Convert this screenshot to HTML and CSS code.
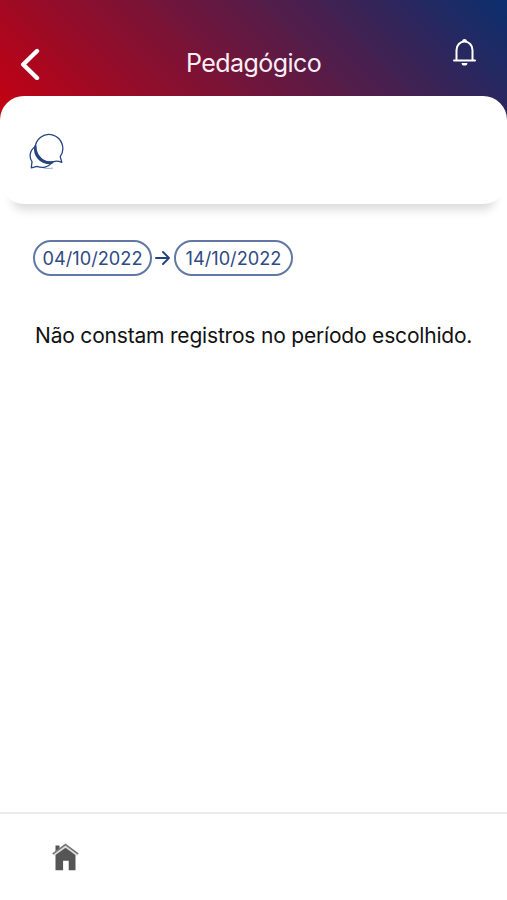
FILE: index.html
```html
<!DOCTYPE html>
<html lang="pt-BR">
<head>
  <meta charset="UTF-8">
  <meta name="viewport" content="width=device-width, initial-scale=1.0">
  <title>Pedagógico</title>
  <link rel="stylesheet" href="styles.css">
</head>
<body>
  <!-- Topo -->
  <header class="topo">
    <a class="voltar" href="#" aria-label="Voltar">
      <svg width="20" height="32" viewBox="0 0 20 32" fill="none" stroke="#fff" stroke-width="4.400" stroke-linecap="round" stroke-linejoin="round">
        <path d="M17 3 3.200 16.500 17 30"/>
      </svg>
    </a>
    <h1>Pedagógico</h1>
    <a class="sino" href="#" aria-label="Notificações">
      <svg width="24" height="28" viewBox="0 0 24 28">
        <path d="M1 22.600h21M3.500 21.600V12a8 8.500 0 0 1 16 0v9.600" fill="none" stroke="#fff" stroke-width="2" stroke-linecap="round"/>
        <path d="M9 4a2.500 3 0 0 1 5 0zM8.600 25h5.800a2.900 2.600 0 0 1-5.800 0z" fill="#fff"/>
      </svg>
    </a>
  </header>

  <!-- Cartão com o ícone de mensagens -->
  <section class="cartao">
    <svg width="36" height="37" viewBox="0 0 36 37" fill="none" stroke="#24457f" stroke-width="1.300" stroke-linejoin="round">
      <path d="M31.200 23.600A13.800 14 0 1 0 24.700 28.600Q28 27.500 32.800 29.300L31.200 23.600Z"/>
      <path d="M6.200 13.500C.6 17.500-.2 24 3 28.600L2.300 34.800 8 33.300C13 35.300 19.500 34.500 22.500 30"/>
      <path d="M6.300 12.500C3.600 22 11.500 32 22.800 30.300L24.500 28.600C15 30.300 6.800 23.500 6.900 13z" fill="#24457f"/>
      <path d="M14 34.800c3 .8 6.500.7 10 .3" stroke-width=".8" opacity=".6"/>
    </svg>
  </section>

  <main>
    <!-- Período -->
    <div class="periodo">
      <button class="data">04/10/2022</button>
      <svg width="16" height="16" viewBox="0 0 16 16" fill="none" stroke="#24417c" stroke-width="1.900" stroke-linecap="round" stroke-linejoin="round">
        <path d="M1 8h13M8 2 14 8l-6 6"/>
      </svg>
      <button class="data">14/10/2022</button>
    </div>
    <p class="aviso">Não constam registros no período escolhido.</p>
  </main>

  <!-- Barra inferior -->
  <nav class="rodape">
    <a href="#" aria-label="Início">
      <svg width="28" height="28" viewBox="0 0 28 28">
        <path d="M4.500 12V2.500h4v5L14.500 3l10 9v15.200h-6.800v-9.400h-5.600v9.400H4.500z" fill="#555"/>
        <path d="M2.500 11.600 14.500 3l12 8.600" fill="none" stroke="#ddd" stroke-width="2.800"/>
        <path d="M2.200 10.600 14.500 1.600l12.200 9" fill="none" stroke="#777" stroke-width="1.700" stroke-linecap="round"/>
      </svg>
    </a>
  </nav>
</body>
</html>
```

FILE: styles.css
```css
* {
  box-sizing: border-box;
}
body {
  margin: 0;
  min-height: 100vh;
  display: flex;
  flex-direction: column;
  font-family: Inter, "Liberation Sans", sans-serif;
  background-color: #fff;
}
a {
  display: block;
}
svg {
  display: block;
}
/* --- Topo --- */
.topo {
  height: 120px;
  padding: 0 30px 0 20px;
  display: grid;
  grid-template-columns: 60px 1fr 60px;
  align-items: start;
  background: linear-gradient(45deg, #c60010 0%, #0b2f6e 100%);
}
.voltar {
  padding-top: 48px;
}
.topo h1 {
  margin: 47px 0 0 10px;
  font-size: 25px;
  font-weight: 400;
  line-height: 32px;
  letter-spacing: -0.55px;
  text-align: center;
  color: #fceef4;
}
.sino {
  justify-self: end;
  padding-top: 38px;
}
/* --- Cartão --- */
.cartao {
  height: 108px;
  margin-top: -24px;
  padding: 37px 29px;
  border-radius: 24px;
  background-color: #fff;
  box-shadow: 0 18px 10px -12px rgba(0,0,0,0.14);
}
/* --- Conteúdo --- */
main {
  flex: 1;
  padding: 36px 33px 0;
}
.periodo {
  display: flex;
  align-items: center;
  gap: 3px;
}
.data {
  width: 119px;
  height: 36px;
  padding: 0;
  border: 2px solid #6278a4;
  border-radius: 18px;
  background-color: #fff;
  font-family: inherit;
  font-size: 18.2px;
  color: #2f4a85;
}
.aviso {
  margin: 46px 0 0 2px;
  font-size: 21px;
  line-height: 28px;
  letter-spacing: -0.19px;
  white-space: nowrap;
  color: #111;
}
/* --- Barra inferior --- */
.rodape {
  height: 88px;
  padding: 29px 51px;
  border-top: 2px solid #ebebeb;
}
```
